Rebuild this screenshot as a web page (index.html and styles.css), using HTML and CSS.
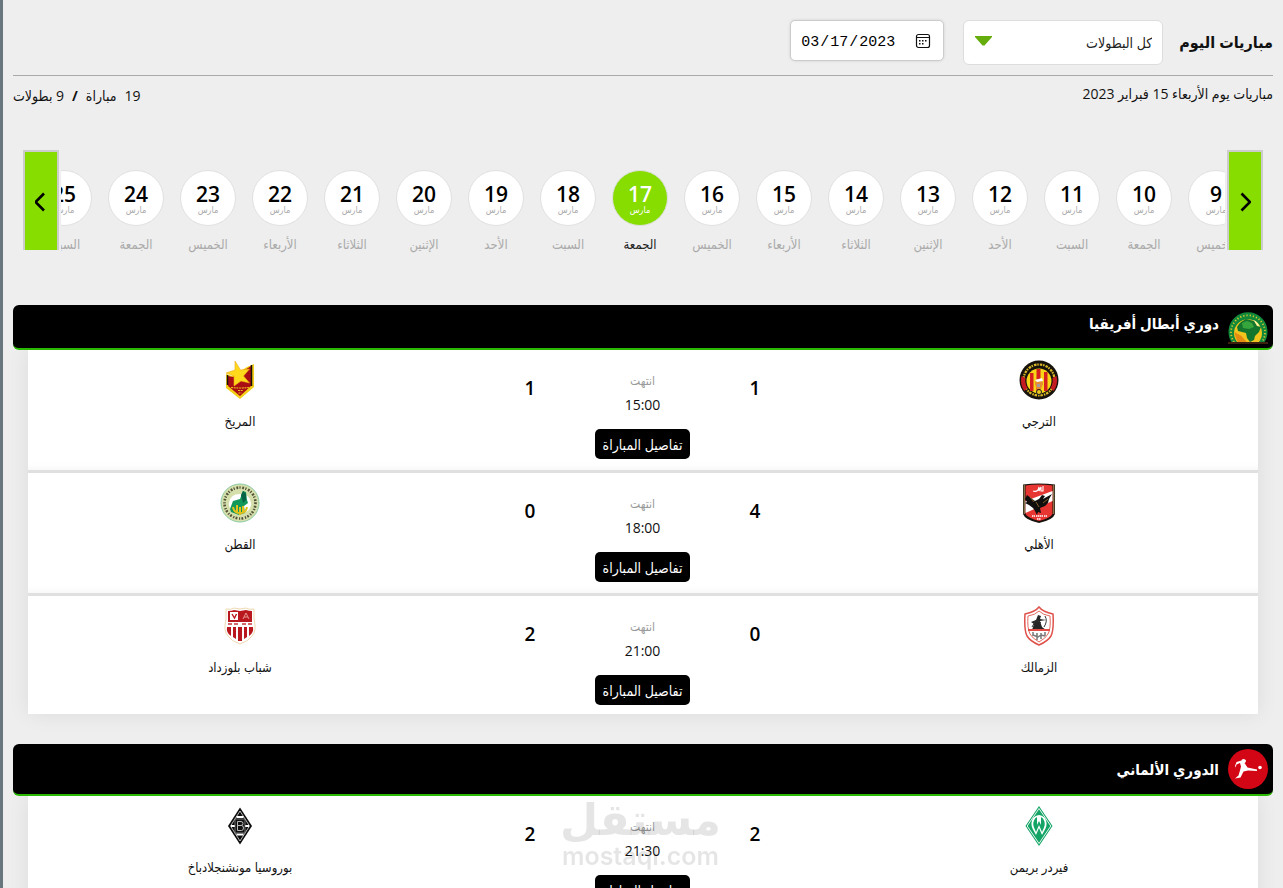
FILE: index.html
```html
<!DOCTYPE html>
<html lang="ar" dir="rtl">
<head>
<meta charset="utf-8">
<meta name="viewport" content="width=device-width, initial-scale=1">
<title>مباريات اليوم</title>
<link rel="stylesheet" href="styles.css">
</head>
<body>
<main class="page">
  <header class="toolbar">
    <h1 class="toolbar-title">مباريات اليوم</h1>
    <div class="select-wrap">
      <select class="league-select" aria-label="البطولة"><option>كل البطولات</option></select>
      <svg class="select-arrow" viewBox="0 0 17 10" aria-hidden="true"><path d="M0 0H17V1L9.500 9.500H7.500L0 1Z" fill="#65ad0d"/></svg>
    </div>
    <div class="date-wrap" dir="ltr">
      <input class="date-input" type="date" value="2023-03-17" aria-label="التاريخ">
      <svg class="date-icon" viewBox="0 0 16 16" aria-hidden="true"><rect x="1.500" y="1.500" width="13" height="13" rx="2" fill="none" stroke="#111" stroke-width="1.200"/><path d="M1.500 4.500H14.500" stroke="#111"/><path d="M7 7h1.500v1.500H7zM10 7h1.500v1.500H10zM4 7h1.500v1.500H4zM4 10h1.500v1.500H4zM7 10h1.500v1.500H7z" fill="#111"/></svg>
    </div>
  </header>

  <div class="summary">
    <p class="summary-day">مباريات يوم الأربعاء 15 فبراير 2023</p>
    <p class="summary-count"><span>19</span><span>مباراة</span><b>/</b><span>9 بطولات</span></p>
  </div>

  <nav class="days" aria-label="الأيام">
    <button class="days-nav" type="button" aria-label="السابق"><svg viewBox="0 0 12 20"><path d="M2.500 1.500 11 10 2.500 18.500" fill="none" stroke="#000" stroke-width="2.600"/></svg></button>
    <div class="days-view">
      <ol class="days-track">
        <li class="day"><span class="day-circle"><b>9</b><small>مارس</small></span><span class="day-name">الخميس</span></li>
        <li class="day"><span class="day-circle"><b>10</b><small>مارس</small></span><span class="day-name">الجمعة</span></li>
        <li class="day"><span class="day-circle"><b>11</b><small>مارس</small></span><span class="day-name">السبت</span></li>
        <li class="day"><span class="day-circle"><b>12</b><small>مارس</small></span><span class="day-name">الأحد</span></li>
        <li class="day"><span class="day-circle"><b>13</b><small>مارس</small></span><span class="day-name">الإثنين</span></li>
        <li class="day"><span class="day-circle"><b>14</b><small>مارس</small></span><span class="day-name">الثلاثاء</span></li>
        <li class="day"><span class="day-circle"><b>15</b><small>مارس</small></span><span class="day-name">الأربعاء</span></li>
        <li class="day"><span class="day-circle"><b>16</b><small>مارس</small></span><span class="day-name">الخميس</span></li>
        <li class="day day-active"><span class="day-circle"><b>17</b><small>مارس</small></span><span class="day-name">الجمعة</span></li>
        <li class="day"><span class="day-circle"><b>18</b><small>مارس</small></span><span class="day-name">السبت</span></li>
        <li class="day"><span class="day-circle"><b>19</b><small>مارس</small></span><span class="day-name">الأحد</span></li>
        <li class="day"><span class="day-circle"><b>20</b><small>مارس</small></span><span class="day-name">الإثنين</span></li>
        <li class="day"><span class="day-circle"><b>21</b><small>مارس</small></span><span class="day-name">الثلاثاء</span></li>
        <li class="day"><span class="day-circle"><b>22</b><small>مارس</small></span><span class="day-name">الأربعاء</span></li>
        <li class="day"><span class="day-circle"><b>23</b><small>مارس</small></span><span class="day-name">الخميس</span></li>
        <li class="day"><span class="day-circle"><b>24</b><small>مارس</small></span><span class="day-name">الجمعة</span></li>
        <li class="day"><span class="day-circle"><b>25</b><small>مارس</small></span><span class="day-name">السبت</span></li>
      </ol>
    </div>
    <button class="days-nav" type="button" aria-label="التالي"><svg viewBox="0 0 12 20"><path d="M9 1.500 0.500 10 9 18.500" fill="none" stroke="#000" stroke-width="2.600"/></svg></button>
  </nav>

  <section class="league">
    <header class="league-head league-head-compact">
      <svg class="league-logo" viewBox="0 0 40 40" aria-hidden="true">
        <path d="M4 32A19.500 19.500 0 1 1 36 32Z" fill="#12883a"/>
        <path d="M6 31A17 17 0 1 1 34 31" fill="none" stroke="#d8c52c" stroke-width="1.800" stroke-dasharray="1.200 2"/>
        <path d="M10 32A14 14 0 1 1 30 32Z" fill="#f1c51d"/>
        <path d="M6.500 21q1 7 4 11h9l-6-7Z" fill="#e58b12"/>
        <path d="M25 9c4 1 6 4 7 8l-4-3Z" fill="#fff2a0"/>
        <path d="M13 11l5-3 4 1 4 1 3 5 4 1-2 5-4 4-1 4-4 2-3-4-1-5-4-1-4-1-1-4 2-3Z" fill="#14762d"/>
        <path d="M14 12l5-2 5 2 2 4-5 2-6-1Z" fill="#36a53c"/>
        <path d="M0 31h40v2H0Z" fill="#3b210e"/>
      </svg>
      <h2 class="league-name">دوري أبطال أفريقيا</h2>
    </header>
    <div class="matches">
      <article class="match">
        <div class="team">
          <svg class="crest" viewBox="0 0 40 40" aria-hidden="true">
            <circle cx="20" cy="20" r="19.500" fill="#17130c"/>
            <circle cx="20" cy="20" r="15.500" fill="none" stroke="#d9b927" stroke-width="2.200" stroke-dasharray="1.500 1.100 2.500 .800"/>
            <path d="M2.500 16a18 18 0 0 0 3 15l3-3a14 14 0 0 1-2-10ZM37.500 16a18 18 0 0 1-3 15l-3-3a14 14 0 0 0 2-10Z" fill="#c41c20"/>
            <circle cx="20" cy="21" r="12.500" fill="#f7d517"/>
            <path d="M11 13h3.500v18H11zM17.500 9h4v24h-4zM25 12h3.500v19H25z" fill="#d5201f"/>
            <path d="M17 19h6l1 5-2 5h-4l-2-5Z" fill="#e58d30"/><path d="M16 20l7-2 1 3-6 1Z" fill="#fff"/>
            <path d="M18 24h3v3h-3z" fill="#a89aa4"/><circle cx="20" cy="32" r="2.500" fill="#edc821" stroke="#222"/>
          </svg>
          <h3 class="team-name">الترجي</h3>
        </div>
        <strong class="score">1</strong>
        <div class="match-info"><span class="status">انتهت</span><time class="time">15:00</time><button class="details" type="button">تفاصيل المباراة</button></div>
        <strong class="score">1</strong>
        <div class="team team-away">
          <svg class="crest" viewBox="0 0 40 40" aria-hidden="true">
            <path d="M6 14l6 2 15-9 7-3v23L20 39 6 28Z" fill="#f3cf17"/>
            <path d="M8 16l5 1 15-9 3-2v20L20 36 8 26Z" fill="#a90c12"/>
            <path d="M7.500 15v10M31.500 5v21" stroke="#16110c" stroke-width="1.500"/>
            <path d="M15 1l5.500 9 9-1-6 7 6 7-8.500-2-7 5V16L6 13l9-3Z" fill="#ffd91a" stroke="#f0a915" stroke-width=".600"/>
            <path d="M11 27.500q9 1 18 0M18 30.500h5M18.500 33h3" fill="none" stroke="#eabc1b" stroke-width="1.200" stroke-dasharray="2 .700"/>
          </svg>
          <h3 class="team-name">المريخ</h3>
        </div>
      </article>

      <article class="match">
        <div class="team">
          <svg class="crest" viewBox="0 0 40 40" aria-hidden="true">
            <path d="M4 1.500q16-2 32 0V31q-2 6-16 9Q6 37 4 31Z" fill="#17120d"/>
            <path d="M6.500 2.500q13-2 27 0V31q-2 4-13.500 7Q9 35 6.500 31Z" fill="#e73531"/>
            <path d="M6.500 18L33.500 8v10L6.500 30Z" fill="#fff"/>
            <path d="M5.200 2v29M34.800 2v29" stroke="#c9ad6f" stroke-width=".900"/>
            <path d="M8 12l8 6 4-2 3-4 3 1-2 3 9-5-3 5-1 4-3 3-5 2 1 5-3-1-1 3-2-4-2-3-4-3-4-2 2-1-2-3Z" fill="#100f0d"/>
            <path d="M17 19l3 5M11 14l4 5M24 20l5-4" stroke="#9d7534" stroke-width=".800"/>
            <path d="M14 8q3 1 5-1l1-3v4l2-4v4h2V3" fill="none" stroke="#fff" stroke-width="1.100"/>
            <path d="M13 33h3M17 33h7M25 33h3M18 36h4" stroke="#fff" stroke-width="1.500" stroke-dasharray="1.500 .500"/>
          </svg>
          <h3 class="team-name">الأهلي</h3>
        </div>
        <strong class="score">4</strong>
        <div class="match-info"><span class="status">انتهت</span><time class="time">18:00</time><button class="details" type="button">تفاصيل المباراة</button></div>
        <strong class="score">0</strong>
        <div class="team team-away">
          <svg class="crest" viewBox="0 0 40 40" aria-hidden="true">
            <circle cx="20" cy="20" r="19" fill="#d5dfab" stroke="#8bcba5"/>
            <circle cx="20" cy="20" r="15.500" fill="none" stroke="#514f38" stroke-width="2.600" stroke-dasharray="1.200 1.700 1.800 1.300"/>
            <path d="M9 20q1-9 11-9t11 9q1 9-11 10-12-1-11-10Z" fill="#fff"/>
            <path d="M10 26l3-8 7-2 3-8 3 1 1 8 1 3-4 3 1 7-6 2-8-3Z" fill="#13985b"/>
            <path d="M21 12l2-4 3 3v6l-3 3Z" fill="#066345"/>
            <path d="M13 24q1 6 7 6t7-6M17 22v7M23 23v7M20 24v8" fill="none" stroke="#e1c21d" stroke-width="2"/>
          </svg>
          <h3 class="team-name">القطن</h3>
        </div>
      </article>

      <article class="match">
        <div class="team">
          <svg class="crest" viewBox="0 0 40 40" aria-hidden="true">
            <path d="M20 1q4 5 14 7 1 16-2 22-3 5-12 9Q11 35 8 30 5 24 6 8q10-2 14-7Z" fill="#fff" stroke="#df514a" stroke-width="1.500"/>
            <path d="M20 5q4 4 11 5 1 13-2 18-2 4-9 8-7-4-9-8-3-6-2-18 7-1 11-5Z" fill="#fff" stroke="#e46a60"/>
            <path d="M19 9l3 1-1 3 6 1-6 1 2 6 4 3H13l2-6-3-2 5-2Z" fill="#252525"/>
            <path d="M26 10q3 5-1 11M13 21l4-7 5 3" fill="none" stroke="#333"/>
            <path d="M9 24h22" stroke="#e14c45" stroke-width="2"/>
            <path d="M14 26v4M18 27v7M22 27v6M26 26v4M14 29l5 2 3-2 4 1" stroke="#777" stroke-width="1.500" fill="none"/>
          </svg>
          <h3 class="team-name">الزمالك</h3>
        </div>
        <strong class="score">0</strong>
        <div class="match-info"><span class="status">انتهت</span><time class="time">21:00</time><button class="details" type="button">تفاصيل المباراة</button></div>
        <strong class="score">2</strong>
        <div class="team team-away">
          <svg class="crest" viewBox="0 0 40 40" aria-hidden="true">
            <path d="M6 3q5 1 8-1l6 1 6-1q3 2 8 1v10q3 12-2 17-3 5-12 8Q11 35 8 30q-5-5-2-17Z" fill="#fff" stroke="#eed9b1"/>
            <path d="M8 5q4 0 6-1l6 1v11H8ZM20 5l6-1q3 1 6 1v11H20Z" fill="#b8181e"/>
            <path d="M10 6h8v8h-8Z" fill="#fff"/><path d="M12 8l2.500 4 2-4" fill="none" stroke="#b8181e" stroke-width="1.400"/>
            <path d="M23 13l3-6 3 6M24 11h4" fill="none" stroke="#e99891"/>
            <path d="M8 18h4M14 18h4M22 18h4M28 18h4" stroke="#d3696b" stroke-width="2"/>
            <path d="M7 21h4v9q-5-3-4-9ZM13 21h3v12l-3-2ZM18 21h4v14h-4ZM24 21h3v10l-3 2ZM29 21h4q1 6-4 9Z" fill="#b8181e"/>
          </svg>
          <h3 class="team-name">شباب بلوزداد</h3>
        </div>
      </article>
    </div>
  </section>

  <section class="league">
    <header class="league-head">
      <svg class="league-logo" viewBox="0 0 40 40" aria-hidden="true">
        <circle cx="20" cy="20" r="20" fill="#d30615"/>
        <path d="M7 17l1.500-4 5-1.500q0-1.500 2-1.500t2.500 1.500q0 2-1.500 2.500l3 4.500 9.500 2v1.500l-9-.500-4.500 1-3 6-5.500 1 3.500-3 1.500-5 1-4-1-3.500-3.500 1.500-1 3Z" fill="#fff"/>
        <circle cx="32" cy="18.500" r="1.800" fill="#fff"/>
      </svg>
      <h2 class="league-name">الدوري الألماني</h2>
    </header>
    <div class="matches">
      <article class="match">
        <div class="team">
          <svg class="crest" viewBox="0 0 40 40" aria-hidden="true">
            <path d="M20 0l13.500 20L20 40 6.500 20Z" fill="#14a566"/>
            <path d="M20 2.500l11.800 17.500L20 37.500 8.200 20Z" fill="none" stroke="#fff" stroke-width=".900"/>
            <path d="M14.500 11.500q5.500-5 11 0 3.500 5 1 11L23 29l-3-7-3 7-3.500-6.500q-2.500-6 1-11Z" fill="#fff"/>
            <path d="M16 12.500l2-1.500v8l2-4 2 4v-8l2 1.500q3 5 1 9L23 26l-3-7-3 7-2-4.500q-2-4 1-9Z" fill="#14a566"/>
          </svg>
          <h3 class="team-name">فيردر بريمن</h3>
        </div>
        <strong class="score">2</strong>
        <div class="match-info"><span class="status">انتهت</span><time class="time">21:30</time><button class="details" type="button">تفاصيل المباراة</button></div>
        <strong class="score">2</strong>
        <div class="team team-away">
          <svg class="crest" viewBox="0 0 40 40" aria-hidden="true">
            <path d="M20 1.500l12 18.500L20 38.500 8 20Z" fill="#0b0b0b"/>
            <path d="M20 5l9.500 15-9.500 15-9.500-15Z" fill="none" stroke="#fff" stroke-width=".700"/>
            <path d="M16.500 11h7M11 20h18M16.500 28.500h7" stroke="#fff" stroke-width="2"/>
            <rect x="15" y="13" width="10" height="14" fill="#111" stroke="#888" stroke-width=".800"/>
            <path d="M17.500 15.500h3.500q2 0 2 2t-2 2h-3.500h4q2 0 2 2.500t-2 2.500h-4Z" fill="none" stroke="#b8b8b8"/>
          </svg>
          <h3 class="team-name">بوروسيا مونشنجلادباخ</h3>
        </div>
      </article>
    </div>
  </section>
</main>
<div class="watermark" aria-hidden="true"><span class="watermark-name">مستقل</span><span class="watermark-site">mostaql.com</span></div>
</body>
</html>
```
FILE: styles.css
```css
* { box-sizing: border-box; }

html {
  background: #eee;
  scrollbar-width: none;
}

body {
  margin: 0;
  min-height: 100vh;
  border-left: 3px solid #68777d;
  background: #eee;
  color: #111;
  font-family: "Open Sans", "DejaVu Sans Condensed", "DejaVu Sans", sans-serif;
  font-size: 14px;
  line-height: 20px;
}

h1, h2, h3, p, ol { margin: 0; padding: 0; }
button, select { font-family: inherit; }

.page { padding: 20px 10px 0; }

.toolbar {
  display: flex;
  align-items: flex-start;
  padding-bottom: 10px;
  border-bottom: 1px solid #aaa;
}

.toolbar-title {
  margin-left: 16px;
  font-size: 16px;
  line-height: 45px;
  white-space: nowrap;
}

.select-wrap {
  position: relative;
  width: 200px;
  margin-left: 19px;
}

.league-select {
  appearance: none;
  width: 100%;
  height: 45px;
  padding: 0 10px;
  border: 1px solid #ddd;
  border-radius: 6px;
  background: #fff;
  color: #222;
  font-size: 14px;
}

.select-arrow {
  position: absolute;
  left: 12px;
  top: 16px;
  width: 17px;
  height: 10px;
  pointer-events: none;
}

.date-wrap { position: relative; }

.date-input {
  display: block;
  width: 154px;
  height: 41px;
  padding: 3px 8px 0 9px;
  border: 1px solid #ccc;
  border-radius: 5px;
  background: #fff;
  box-shadow: 0 0 3px rgba(0, 0, 0, .12);
  color: #000;
  font-family: "Liberation Mono", monospace;
  font-size: 15px;
}

.date-input::-webkit-calendar-picker-indicator { opacity: 0; }

.date-icon {
  position: absolute;
  right: 13px;
  top: 13px;
  width: 16px;
  height: 16px;
  pointer-events: none;
}

.summary {
  display: flex;
  justify-content: space-between;
  padding-top: 8px;
}

.summary-count {
  display: flex;
  gap: 8px;
  padding-top: 2px;
}

.days {
  display: flex;
  gap: 2px;
  height: 100px;
  margin: 44px 10px 55px;
}

.days-nav {
  flex: none;
  display: flex;
  align-items: center;
  justify-content: center;
  width: 36px;
  padding: 2px 0 0;
  border: 2px solid #ccc;
  border-bottom: 0;
  background: #87dc00;
}

.days-nav svg { width: 12px; height: 20px; }

.days-view {
  flex: 1;
  min-width: 0;
  overflow-x: clip;
}

.days-track {
  display: flex;
  margin-right: -27px;
  padding-top: 20px;
  list-style: none;
}

.day {
  flex: none;
  display: flex;
  flex-direction: column;
  align-items: center;
  gap: 8px;
  width: 72px;
}

.day-circle {
  display: flex;
  flex-direction: column;
  align-items: center;
  justify-content: center;
  width: 56px;
  height: 56px;
  padding-top: 4px;
  border: 1px solid #e0e0e0;
  border-radius: 50%;
  background: #fff;
}

.day-circle b {
  color: #000;
  font-size: 21px;
  font-weight: 600;
  line-height: 20px;
}

.day-circle small {
  color: #aaa;
  font-size: 9px;
  line-height: 12px;
}

.day-name {
  color: #aaa;
  font-size: 13px;
  white-space: nowrap;
}

.day-active .day-circle { background: #87dc00; }
.day-active b, .day-active small { color: #fff; }
.day-active .day-name { color: #222; }

.league { margin-bottom: 30px; }

.league-head {
  position: relative;
  display: flex;
  align-items: center;
  gap: 9px;
  height: 52px;
  padding: 0 5px;
  border-bottom: 2px solid #28b900;
  border-radius: 6px;
  background: #000;
}

.league-head-compact {
  align-items: flex-start;
  height: 45px;
  overflow: hidden;
}

.league-logo {
  flex: none;
  width: 40px;
  height: 40px;
}

.league-head-compact .league-logo { margin-top: 6px; }

.league-name {
  color: #fff;
  font-size: 15px;
  line-height: 36px;
}

.matches {
  margin: 0 15px;
  background: #fff;
  box-shadow: 0 0 20px rgba(0, 0, 0, .08);
}

.match {
  display: grid;
  grid-template-columns: 438fr 130fr 95fr 130fr 437fr;
  min-height: 123px;
  padding-top: 10px;
  border-bottom: 3px solid #e0e0e0;
  box-shadow: inset 0 -10px 10px -10px rgba(0, 0, 0, .06);
}

.match:last-child {
  min-height: 118px;
  border-bottom: 0;
  box-shadow: none;
}

.team {
  display: flex;
  flex-direction: column;
  align-items: center;
  gap: 11px;
}

.team-away { padding-right: 13px; }

.crest { width: 40px; height: 40px; }

.team-name {
  font-size: 13px;
  font-weight: 400;
}

.score {
  padding-top: 18px;
  color: #000;
  font-size: 19px;
  font-weight: 600;
  text-align: center;
}

.match-info {
  display: flex;
  flex-direction: column;
  align-items: center;
  padding: 11px 0 9px;
}

.status {
  color: #999;
  font-size: 12px;
}

.time {
  margin-top: 4px;
  font-size: 14px;
}

.details {
  min-width: 95px;
  height: 30px;
  margin-top: 14px;
  padding: 0 7px;
  border: 0;
  border-radius: 5px;
  background: #000;
  color: #fff;
  font-size: 14px;
  white-space: nowrap;
}

.watermark {
  position: fixed;
  left: 50%;
  bottom: 18px;
  display: flex;
  flex-direction: column;
  align-items: center;
  width: 160px;
  margin-left: -81px;
  color: rgba(0, 0, 0, .1);
  font-weight: 700;
  pointer-events: none;
}

.watermark-name {
  font-family: "DejaVu Sans", sans-serif;
  font-size: 44px;
  line-height: 44px;
}

.watermark-site {
  font-family: Inter, sans-serif;
  font-size: 25px;
  font-weight: 600;
  line-height: 28px;
}
```
